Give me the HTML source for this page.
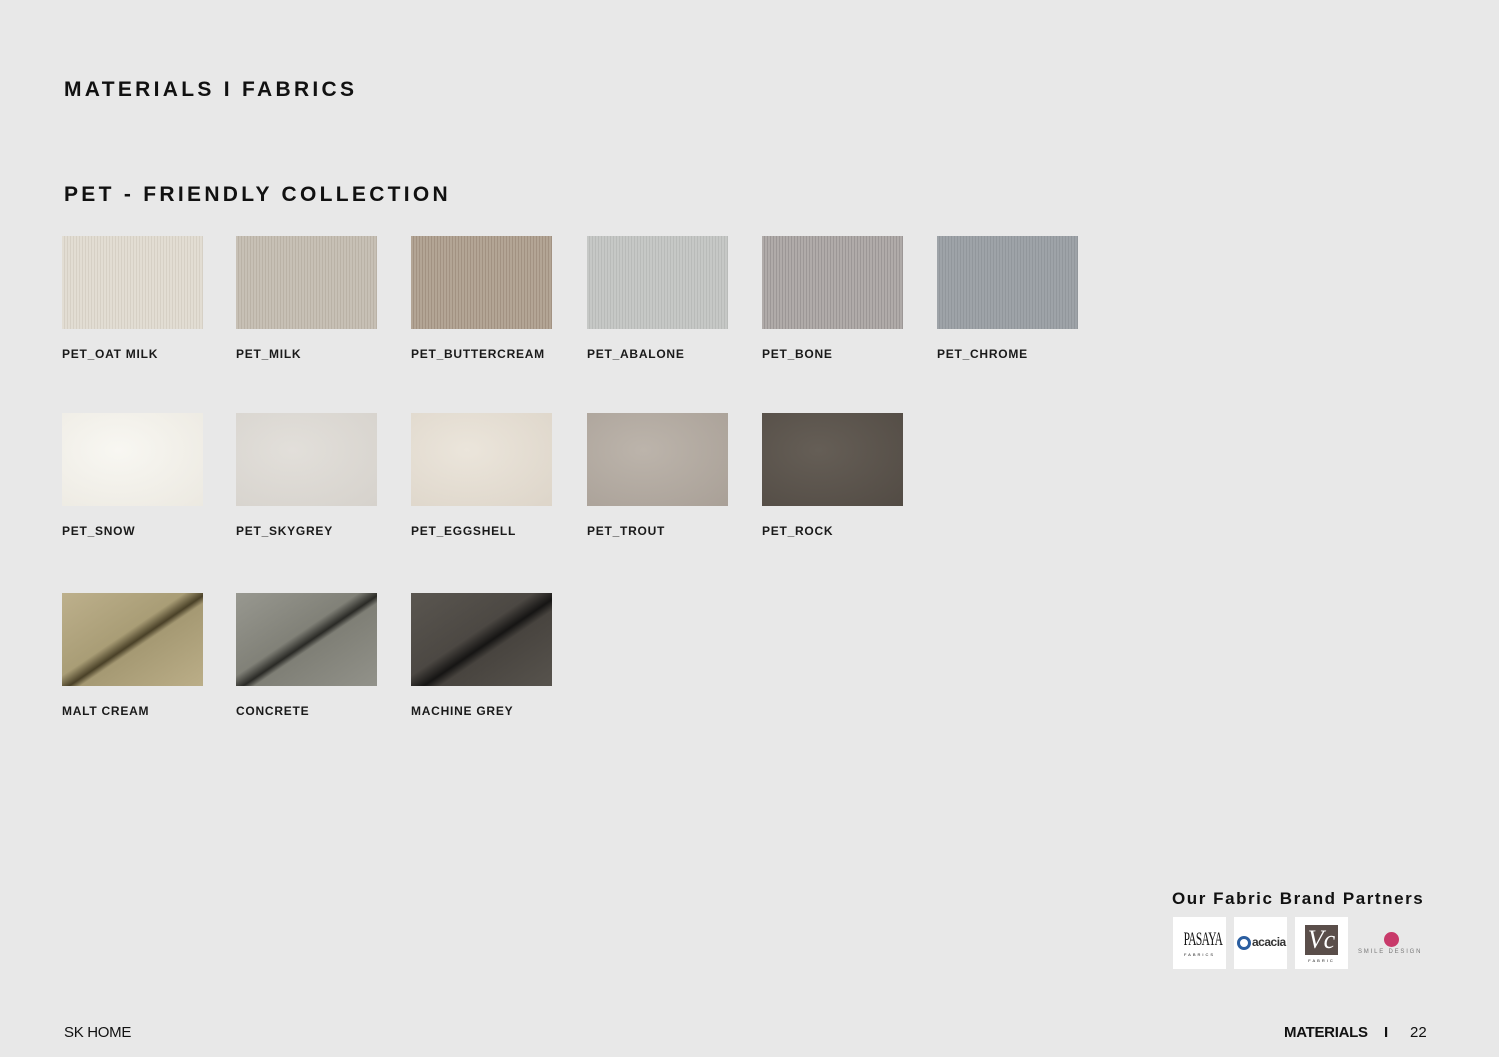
<!DOCTYPE html>
<html><head><meta charset="utf-8"><style>
*{margin:0;padding:0;box-sizing:border-box}
body{width:1499px;height:1057px;background:#e8e8e8;font-family:"Liberation Sans",sans-serif;color:#111;position:relative;overflow:hidden}
.t{position:absolute;font-weight:bold;font-size:21px;letter-spacing:3.3px;left:64px}
.sw{position:absolute;width:141px;height:93px}
.lb{position:absolute;font-size:12px;font-weight:bold;letter-spacing:.75px;color:#1a1a1a}
.logo{position:absolute;top:917px;width:53px;height:52px;background:#fff}
</style></head><body>
<div class="t" style="top:78px">MATERIALS I FABRICS</div>
<div class="t" style="top:183px">PET - FRIENDLY COLLECTION</div>

<div class="sw" style="left:62px;top:236px;background:repeating-linear-gradient(90deg,#e2ddd3 0 2px,#d6d0c5 2px 3px),#ddd7cd"></div>
<div class="sw" style="left:236px;top:236px;background:repeating-linear-gradient(90deg,#c7c0b5 0 2px,#bab2a6 2px 3px)"></div>
<div class="sw" style="left:411px;top:236px;background:repeating-linear-gradient(90deg,#b3a595 0 2px,#a29282 2px 3px)"></div>
<div class="sw" style="left:587px;top:236px;background:repeating-linear-gradient(90deg,#c6c8c6 0 2px,#b9bbb9 2px 3px)"></div>
<div class="sw" style="left:762px;top:236px;background:repeating-linear-gradient(90deg,#b0aba9 0 2px,#9c9796 2px 3px)"></div>
<div class="sw" style="left:937px;top:236px;background:repeating-linear-gradient(90deg,#9ea3a8 0 2px,#92979c 2px 3px)"></div>
<div class="lb" style="left:62px;top:347px">PET_OAT MILK</div>
<div class="lb" style="left:236px;top:347px">PET_MILK</div>
<div class="lb" style="left:411px;top:347px">PET_BUTTERCREAM</div>
<div class="lb" style="left:587px;top:347px">PET_ABALONE</div>
<div class="lb" style="left:762px;top:347px">PET_BONE</div>
<div class="lb" style="left:937px;top:347px">PET_CHROME</div>

<div class="sw" style="left:62px;top:413px;background:radial-gradient(ellipse at 40% 40%,#f8f7f2,#ece9e1)"></div>
<div class="sw" style="left:236px;top:413px;background:radial-gradient(ellipse at 40% 40%,#e2dfda,#d6d2cc)"></div>
<div class="sw" style="left:411px;top:413px;background:radial-gradient(ellipse at 40% 40%,#ebe5db,#ddd5c9)"></div>
<div class="sw" style="left:587px;top:413px;background:radial-gradient(ellipse at 40% 40%,#bcb4ab,#a9a097)"></div>
<div class="sw" style="left:762px;top:413px;background:radial-gradient(ellipse at 40% 40%,#655e56,#524b44)"></div>
<div class="lb" style="left:62px;top:524px">PET_SNOW</div>
<div class="lb" style="left:236px;top:524px">PET_SKYGREY</div>
<div class="lb" style="left:411px;top:524px">PET_EGGSHELL</div>
<div class="lb" style="left:587px;top:524px">PET_TROUT</div>
<div class="lb" style="left:762px;top:524px">PET_ROCK</div>

<div class="sw" style="left:62px;top:593px;background:linear-gradient(146deg,#bdb08c 0%,#a99d76 44%,#4a4128 52%,#a59973 56%,#bbae88 100%)"></div>
<div class="sw" style="left:236px;top:593px;background:linear-gradient(146deg,#989890 0%,#818178 44%,#2a2a26 52%,#7f7f76 56%,#92928a 100%)"></div>
<div class="sw" style="left:411px;top:593px;background:linear-gradient(146deg,#5a5650 0%,#4c4843 44%,#161514 54%,#48443f 60%,#57534d 100%)"></div>
<div class="lb" style="left:62px;top:704px">MALT CREAM</div>
<div class="lb" style="left:236px;top:704px">CONCRETE</div>
<div class="lb" style="left:411px;top:704px">MACHINE GREY</div>

<div style="position:absolute;left:1172px;top:889px;font-size:17px;font-weight:bold;letter-spacing:1.55px">Our Fabric Brand Partners</div>
<div class="logo" style="left:1173px"><div style="position:absolute;top:12px;width:100%;text-align:center;font-family:'Liberation Serif',serif;font-size:19px;transform:scaleX(.6);letter-spacing:-1px">PASAYA</div><div style="position:absolute;top:35px;width:100%;text-align:center;font-size:4px;letter-spacing:2px">FABRICS</div></div>
<div class="logo" style="left:1234px"><div style="position:absolute;left:3px;top:19px;width:14px;height:14px;border:3px solid #2b5ea0;border-radius:50%"></div><div style="position:absolute;left:18px;top:18px;font-size:12px;font-weight:bold;color:#333;letter-spacing:-.5px">acacia</div></div>
<div class="logo" style="left:1295px"><div style="position:absolute;left:10px;top:8px;width:33px;height:30px;background:#5a4e4a;color:#fff;font-family:'Liberation Serif',serif;font-style:italic;font-size:26px;text-align:center;line-height:30px">Vc</div><div style="position:absolute;top:41px;width:100%;text-align:center;font-size:4px;letter-spacing:2px">FABRIC</div></div>
<div style="position:absolute;left:1384px;top:932px;width:15px;height:15px;border-radius:50%;background:#c83a6a"></div>
<div style="position:absolute;left:1358px;top:949px;font-size:6px;letter-spacing:1.8px;color:#777">SMILE DESIGN</div>

<div style="position:absolute;left:64px;top:1024px;font-size:15px;letter-spacing:-.3px">SK HOME</div>
<div style="position:absolute;left:1284px;top:1024px;font-size:15px;font-weight:bold;letter-spacing:-.3px">MATERIALS</div>
<div style="position:absolute;left:1384px;top:1024px;font-size:15px;font-weight:bold">I</div>
<div style="position:absolute;left:1410px;top:1024px;font-size:15px">22</div>
</body></html>
